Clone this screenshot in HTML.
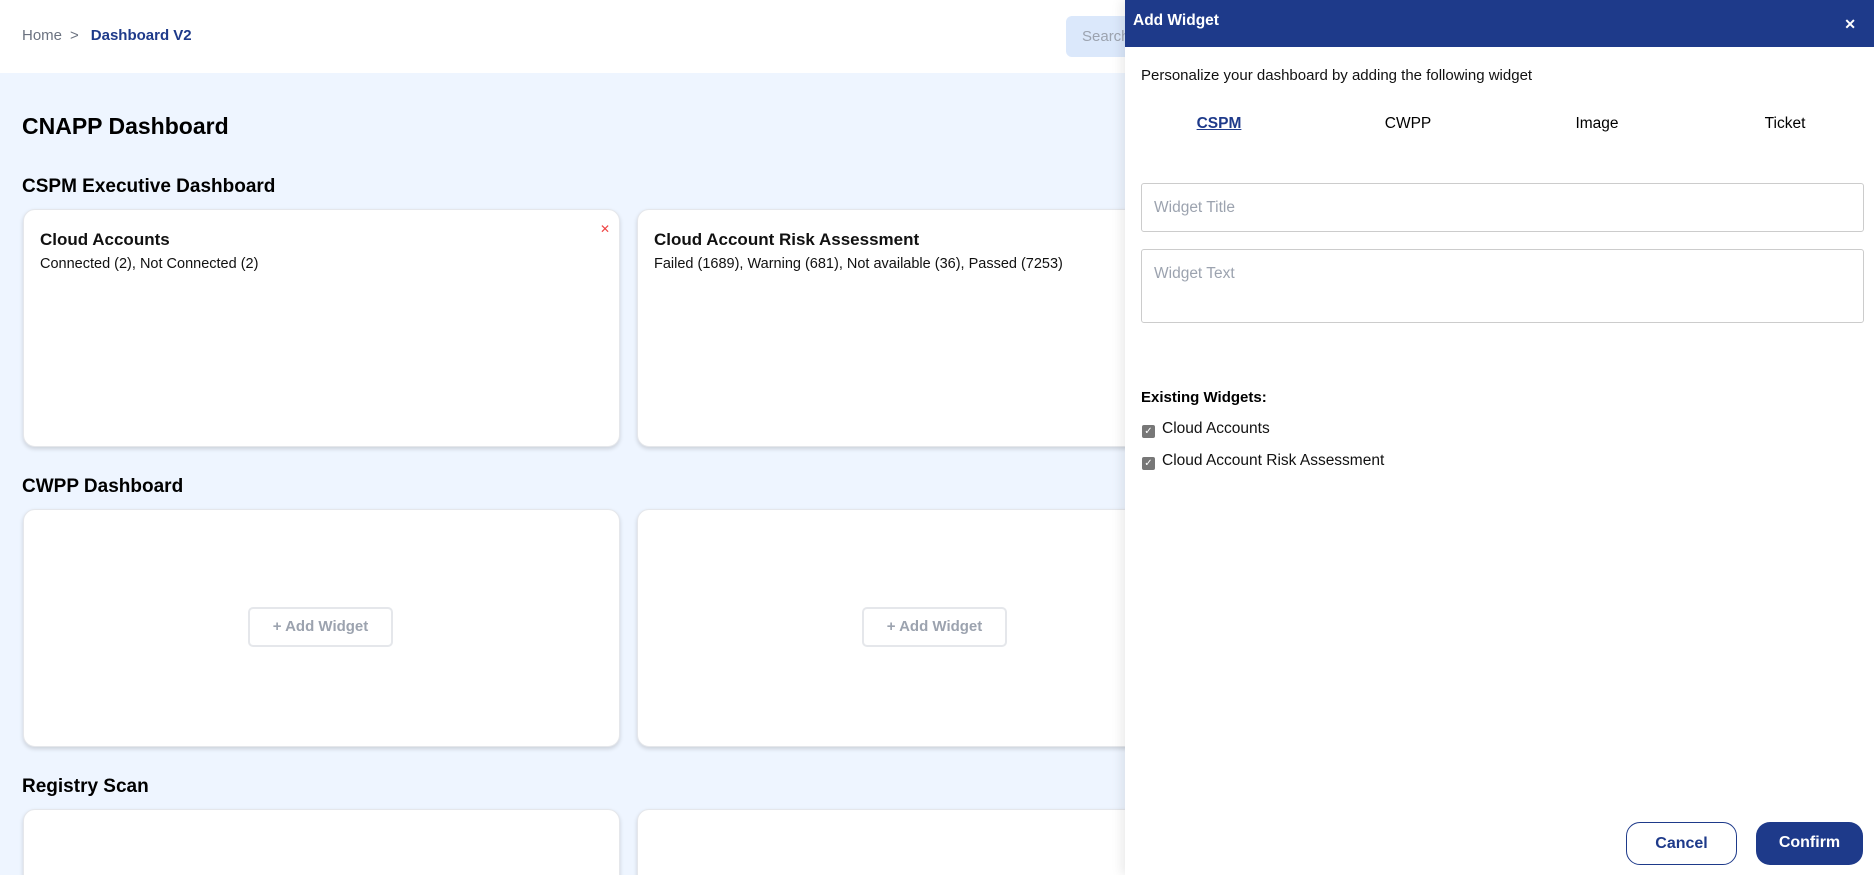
<!DOCTYPE html>
<html style="overflow:hidden;height:875px"><head><meta charset="utf-8"><style>
*{box-sizing:border-box;margin:0;padding:0}
html,body{width:1874px;height:875px;overflow:hidden}
body{background:#eef5ff;font-family:"Liberation Sans",sans-serif;position:relative;color:#000}
#wrap{position:absolute;left:0;top:0;width:1874px;height:875px;overflow:hidden}
.hdr{position:absolute;left:0;top:0;width:1874px;height:73px;background:#fff}
.bc{position:absolute;left:22px;top:27px;font-size:15px;color:#6b7280}
.bc b{color:#1e3a8a;margin-left:6px}
.bc span{margin:0 6px 0 8px}
.search{position:absolute;left:1066px;top:16px;width:120px;height:41px;background:#dbe8fb;border-radius:6px;color:#9ca3af;font-size:15px;padding:12px 16px}
h1{position:absolute;left:22px;top:113px;font-size:23px;font-weight:bold}
h2{position:absolute;left:22px;font-size:19px;font-weight:bold}
.card{position:absolute;background:#fff;border-radius:12px;box-shadow:0 2px 4px rgba(0,0,0,.15);border:1px solid #e5e7eb}
.card .t{position:absolute;left:16px;top:20px;font-size:17px;font-weight:bold;color:#111}
.card .s{position:absolute;left:16px;top:46px;font-size:14.5px;color:#111}
.x{position:absolute;right:9px;top:12px;color:#ef4444;font-size:12px}
.aw{position:absolute;width:145px;height:40px;border:2px solid #e5e7eb;border-radius:5px;color:#9ca3af;font-size:15px;font-weight:bold;text-align:center;line-height:36px;background:#fff}
.panel{position:absolute;left:1125px;top:0;width:749px;height:875px;background:#fff;box-shadow:-4px 0 10px rgba(0,0,0,.08)}
.ph{height:47px;background:#1e3a8a;color:#fff;font-weight:bold;font-size:15.5px;padding:12px 8px}
.cl{position:absolute;right:18px;top:16px;color:#fff;font-size:14px;font-weight:bold}
.tab{position:absolute;top:115px;font-size:15.5px;transform:translateX(-50%)}
.inp{position:absolute;left:16px;width:723px;border:1px solid #ccc;border-radius:3px;color:#9ca3af;font-size:15.5px;padding:15px 12px}
.cb{position:absolute;left:17px;font-size:15.5px;color:#111}
.cb i{display:inline-block;width:13px;height:13px;background:#777;border-radius:2px;vertical-align:-1px;margin-right:7px;color:#fff;font-size:10px;font-style:normal;line-height:13px;text-align:center}
.btn{position:absolute;top:822px;height:43px;border-radius:14px;font-size:16px;font-weight:bold;text-align:center;line-height:41px}
</style></head><body><div id="wrap">
<div class="hdr"></div>
<div class="bc">Home<span>&gt;</span><b>Dashboard V2</b></div>
<div class="search">Search</div>
<h1>CNAPP Dashboard</h1>
<h2 style="top:176px">CSPM Executive Dashboard</h2>
<div class="card" style="left:23px;top:209px;width:597px;height:238px"><div class="t">Cloud Accounts</div><div class="s">Connected (2), Not Connected (2)</div><div class="x">✕</div></div>
<div class="card" style="left:637px;top:209px;width:597px;height:238px"><div class="t">Cloud Account Risk Assessment</div><div class="s">Failed (1689), Warning (681), Not available (36), Passed (7253)</div></div>
<h2 style="top:476px">CWPP Dashboard</h2>
<div class="card" style="left:23px;top:509px;width:597px;height:238px"></div>
<div class="card" style="left:637px;top:509px;width:597px;height:238px"></div>
<div class="aw" style="left:248px;top:607px">+ Add Widget</div>
<div class="aw" style="left:862px;top:607px">+ Add Widget</div>
<h2 style="top:776px">Registry Scan</h2>
<div class="card" style="left:23px;top:809px;width:597px;height:80px"></div>
<div class="card" style="left:637px;top:809px;width:597px;height:80px"></div>
<div class="panel">
<div class="ph">Add Widget</div><div class="cl">✕</div>
<div style="position:absolute;left:16px;top:67px;font-size:15px;color:#111">Personalize your dashboard by adding the following widget</div>
<div class="tab" style="left:94px;color:#1e3a8a;font-weight:bold;text-decoration:underline">CSPM</div>
<div class="tab" style="left:283px">CWPP</div>
<div class="tab" style="left:472px">Image</div>
<div class="tab" style="left:660px">Ticket</div>
<div class="inp" style="top:183px;height:49px">Widget Title</div>
<div class="inp" style="top:249px;height:74px">Widget Text</div>
<div style="position:absolute;left:16px;top:389px;font-size:15px;font-weight:bold">Existing Widgets:</div>
<div class="cb" style="top:420px"><i>✓</i>Cloud Accounts</div>
<div class="cb" style="top:452px"><i>✓</i>Cloud Account Risk Assessment</div>
<div class="btn" style="left:501px;width:111px;border:1.5px solid #1e3a8a;color:#1e3a8a">Cancel</div>
<div class="btn" style="left:631px;width:107px;background:#1e3a8a;color:#fff">Confirm</div>
</div>
</div></body></html>
